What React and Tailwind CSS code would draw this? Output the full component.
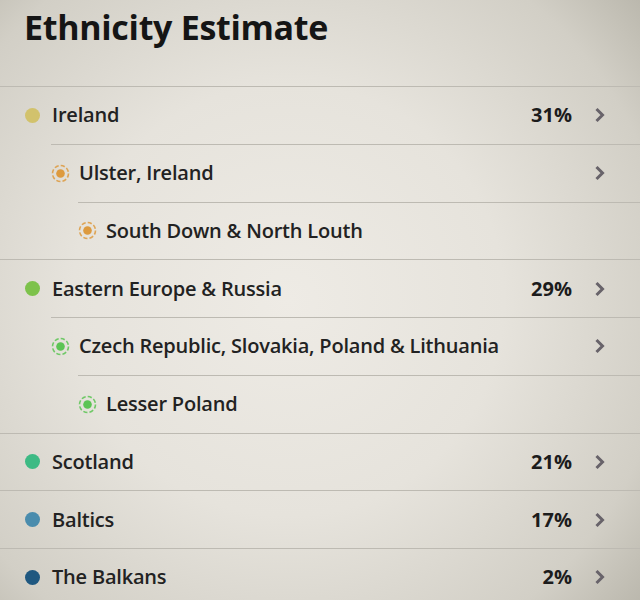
import React from "react";

const rows = [
  { level: 1, name: "Ireland", pct: "31%", color: "#d2c26c", chevron: true },
  { level: 2, name: "Ulster, Ireland", color: "#dd9a3e", chevron: true },
  { level: 3, name: "South Down & North Louth", color: "#dd9a3e" },
  { level: 1, name: "Eastern Europe & Russia", pct: "29%", color: "#7dc24b", chevron: true },
  { level: 2, name: "Czech Republic, Slovakia, Poland & Lithuania", color: "#5cc454", chevron: true },
  { level: 3, name: "Lesser Poland", color: "#5cc454" },
  { level: 1, name: "Scotland", pct: "21%", color: "#3dba84", chevron: true },
  { level: 1, name: "Baltics", pct: "17%", color: "#4a8cad", chevron: true },
  { level: 1, name: "The Balkans", pct: "2%", color: "#1f5880", chevron: true },
];

function Chevron() {
  return (
    <svg width="12" height="16" viewBox="0 0 12 16" className="shrink-0">
      <path d="M2.5 2 L8.5 8 L2.5 14" fill="none" stroke="#68636a" strokeWidth="3" strokeLinejoin="miter" />
    </svg>
  );
}

function Ring({ color }) {
  return (
    <svg width="19" height="19" viewBox="0 0 19 19" className="shrink-0">
      <circle cx="9.5" cy="9.5" r="8" fill="none" stroke={color} strokeWidth="1.6" strokeDasharray="4.2 2.08" opacity="0.85" />
      <circle cx="9.5" cy="9.5" r="4.3" fill={color} />
    </svg>
  );
}

export default function App() {
  return (
    <div
      className="w-[640px] h-[600px] overflow-hidden text-[#1e1e1e] bg-[radial-gradient(ellipse_75%_80%_at_45%_50%,#eeebe5_0%,#e6e3dc_45%,#d2cfc6_80%,#a8a599_110%)]"
      style={{ fontFamily: "'Open Sans', 'Noto Sans', sans-serif" }}
    >
      <div className="h-[86px] pl-[24px] pt-[5px]">
        <h1 className="text-[34px] font-bold leading-[44px] tracking-[-0.3px] text-[#151515]">Ethnicity Estimate</h1>
      </div>
      {rows.map((r, i) => (
        <div
          key={i}
          className={
            "flex items-center h-[57.75px] border-t border-[#bdbab2] pr-[34px] " +
            (r.level === 1 ? "ml-0 pl-[25px]" : r.level === 2 ? "ml-[51px]" : "ml-[78px]")
          }
        >
          {r.level === 1 ? (
            <span className="w-[15px] h-[15px] rounded-full shrink-0" style={{ backgroundColor: r.color }} />
          ) : (
            <Ring color={r.color} />
          )}
          <span className={"text-[20px] font-semibold tracking-[-0.2px] text-[#222] " + (r.level === 1 ? "ml-[12px]" : "ml-[9px]")}>{r.name}</span>
          <span className="flex-1" />
          {r.pct && <span className="text-[20px] font-bold text-[#1c1c1c] mr-[22px]">{r.pct}</span>}
          {r.chevron && <Chevron />}
        </div>
      ))}
    </div>
  );
}
